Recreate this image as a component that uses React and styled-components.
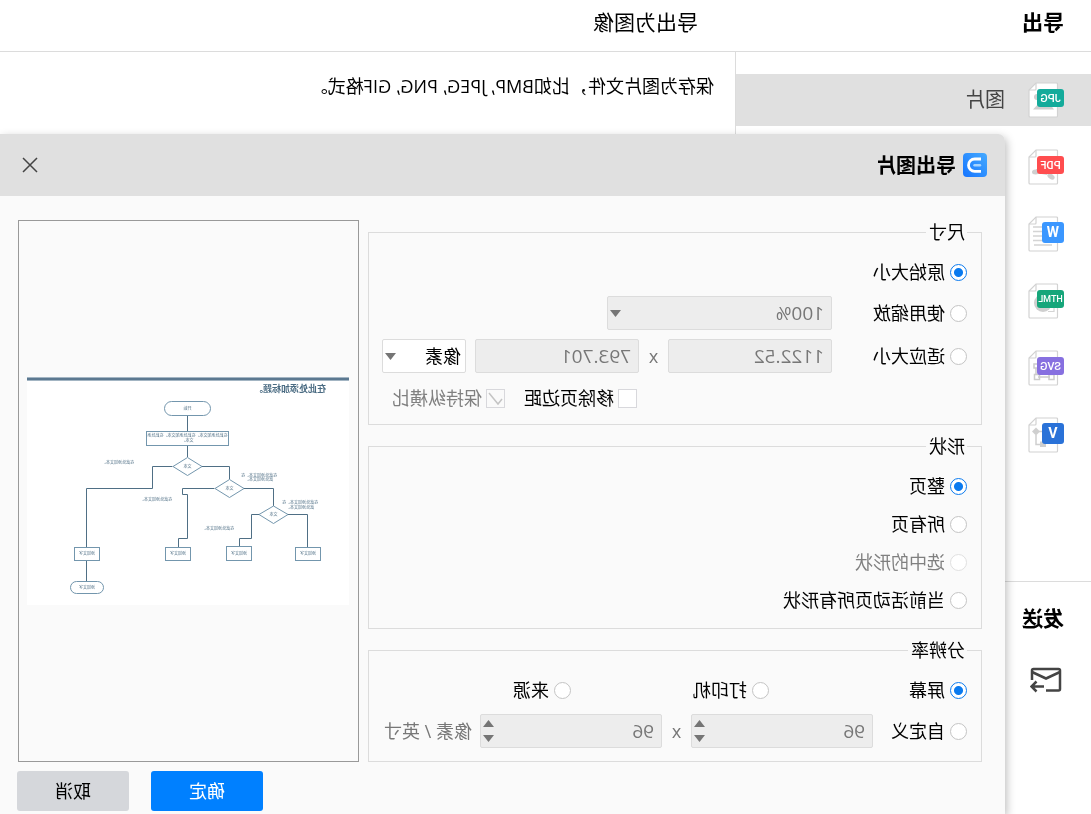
import React, { useState } from "react";
import styled, { createGlobalStyle } from "styled-components";

const GlobalStyle = createGlobalStyle`
  * {
    box-sizing: border-box;
  }

  body {
    margin: 0;
    background: #ffffff;
    color: #000000;
    font-family: "Open Sans", "Noto Sans CJK SC", sans-serif;
    font-size: 18px;
    line-height: 24px;
  }

  input,
  select,
  button {
    margin: 0;
    font: inherit;
  }
`;

// the whole window is flipped left to right
const Page = styled.div`
  position: relative;
  display: flex;
  flex-direction: column;
  min-height: 100vh;
  overflow: hidden;
  transform: scaleX(-1);
`;

const TopBar = styled.header`
  display: grid;
  grid-template-columns: 356px 1fr;
  align-items: center;
  height: 52px;
  padding-bottom: 8px;
  border-bottom: 1px solid #dcdcdc;
`;

const Heading = styled.h2`
  margin: 0;
  padding-left: 27px;
  font-size: 21px;
  font-weight: 700;
`;

const PageTitle = styled.h1`
  margin: 0;
  padding-left: 37px;
  font-size: 21px;
  font-weight: 400;
`;

const Columns = styled.div`
  display: grid;
  grid-template-columns: 356px 1fr;
  flex: 1;
`;

const Sidebar = styled.nav`
  border-right: 1px solid #dcdcdc;
`;

const FormatList = styled.div`
  display: flex;
  flex-direction: column;
  gap: 15px;
  height: 530px;
  padding-top: 22px;
  border-bottom: 1px solid #dcdcdc;
`;

const FormatButton = styled.button`
  display: flex;
  align-items: center;
  gap: 23px;
  height: 52px;
  padding: 0 27px;
  border: 0;
  background: ${(props) => (props.$active ? "#e0e0e0" : "transparent")};
  color: #444444;
  font-size: 20px;
`;

const SendSection = styled.div`
  padding-top: 24px;
`;

const MailButton = styled.button`
  display: block;
  margin: 37px 0 0 29px;
  padding: 0;
  border: 0;
  background: transparent;
`;

const Description = styled.p`
  margin: 0;
  padding: 22px 21px;
  font-size: 18px;
`;

const Dialog = styled.section`
  position: absolute;
  top: 134px;
  right: 0;
  bottom: 0;
  left: 86px;
  border-top-left-radius: 7px;
  background: #fafafa;
  box-shadow: -2px 3px 8px rgba(0, 0, 0, 0.25);
`;

const DialogHeader = styled.div`
  display: flex;
  align-items: center;
  gap: 7px;
  height: 62px;
  padding: 0 21px 0 18px;
  border-top-left-radius: 7px;
  background: #e0e0e0;
`;

const DialogTitle = styled.h2`
  flex: 1;
  margin: 0;
  padding-top: 2px;
  font-size: 20px;
  font-weight: 700;
`;

const CloseButton = styled.button`
  display: flex;
  padding: 0;
  border: 0;
  background: transparent;
`;

const DialogBody = styled.div`
  display: flex;
  gap: 9px;
  padding: 24px 18px 0 23px;
`;

const Options = styled.form`
  display: flex;
  flex: 1;
  flex-direction: column;
  gap: 9px;
  min-width: 0;
`;

const Group = styled.fieldset`
  min-width: 0;
  margin: 0;
  padding: 13px 14px ${(props) => props.$bottom || 13}px;
  border: 1px solid #dcdcdc;
`;

const Legend = styled.legend`
  padding: 0 3px 0 2px;
`;

const Rows = styled.div`
  display: flex;
  flex-direction: column;
  gap: ${(props) => props.$gap || 9}px;
`;

const Row = styled.div`
  display: flex;
  align-items: center;
  height: ${(props) => props.$height || 30}px;
`;

const Choice = styled.label`
  display: flex;
  flex: none;
  align-items: center;
  gap: 5px;
  width: ${(props) => (props.$width ? `${props.$width}px` : "auto")};
  color: ${(props) => (props.$disabled ? "#808080" : "#000000")};
  white-space: nowrap;
`;

const Radio = styled.input`
  flex: none;
  width: 17px;
  height: 17px;
  border: 1px solid #c4c4c4;
  border-radius: 50%;
  appearance: none;
  background: #ffffff;

  &:checked {
    border-color: #0a7aef;
    background: radial-gradient(circle, #0a7aef 4px, #ffffff 5px);
  }

  &:disabled {
    border-color: #e0e0e0;
  }
`;

const CheckLabel = styled(Choice)`
  gap: 4px;
`;

const Check = styled.input`
  flex: none;
  width: 19px;
  height: 19px;
  border: 1px solid #d8d8dc;
  appearance: none;
  background: #ffffff;

  &:checked {
    background: url("data:image/svg+xml,%3Csvg xmlns='http://www.w3.org/2000/svg' viewBox='0 0 17 17'%3E%3Cpath d='M2 9L6 14L15 3' fill='none' stroke='%23c4c4c4' stroke-width='1.5'/%3E%3C/svg%3E");
  }

  &:disabled {
    background-color: #fafafa;
  }
`;

const Field = styled.div`
  position: relative;
  flex: none;
  width: ${(props) => props.$width}px;
  height: 34px;
`;

const TextBox = styled.input`
  width: 100%;
  height: 34px;
  padding: 0 7px;
  border: 1px solid #dcdcdc;
  border-radius: 2px;
  background: #ededed;
  color: #777777;
  font-size: 19px;
`;

const SelectBox = styled.select`
  width: 100%;
  height: 34px;
  padding: 0 ${(props) => (props.disabled ? 7 : 4)}px;
  border: 1px solid #dcdcdc;
  border-radius: 2px;
  appearance: none;
  background: ${(props) => (props.disabled ? "#ededed" : "#ffffff")};
  color: ${(props) => (props.disabled ? "#777777" : "#000000")};
  font-size: ${(props) => (props.disabled ? 19 : 18)}px;
  opacity: 1;
`;

const SelectArrow = styled.span`
  position: absolute;
  top: 14px;
  right: 3px;
  display: flex;
  pointer-events: none;
`;

const SpinButtons = styled.div`
  position: absolute;
  top: 6px;
  right: 3px;
  display: flex;
  flex-direction: column;
  gap: 8px;

  button {
    display: flex;
    padding: 0;
    border: 0;
    background: transparent;
  }
`;

const Times = styled.span`
  flex: none;
  width: 29px;
  color: #777777;
  text-align: center;
`;

const Unit = styled.span`
  padding-left: 8px;
  color: #777777;
  white-space: nowrap;
`;

const Spacer = styled.div`
  flex: none;
  width: ${(props) => props.$width}px;
`;

const Preview = styled.div`
  display: flex;
  flex: none;
  align-items: center;
  justify-content: center;
  width: 341px;
  border: 1px solid #999999;
`;

const Footer = styled.div`
  display: flex;
  justify-content: flex-end;
  gap: 22px;
  padding: 9px 17px 0;
`;

const Button = styled.button`
  width: 112px;
  height: 40px;
  border: 0;
  border-radius: 3px;
  background: ${(props) => (props.$primary ? "#0080ff" : "#d5d7db")};
  color: ${(props) => (props.$primary ? "#ffffff" : "#000000")};
`;

const fileDrawings = {
  JPG: (
    <g fill="#cfcfcf">
      <circle cx="27" cy="15" r="3" />
      <path d="M10 27.500L17 18L21 23L24 20L31 27.500Z" />
    </g>
  ),
  PDF: (
    <g fill="#cfcfcf">
      <ellipse cx="13" cy="27.500" rx="4" ry="2.500" transform="rotate(-35 13 27.500)" />
      <ellipse cx="28.500" cy="23" rx="3.500" ry="2.500" />
      <path d="M17 22L28 20V24L17 26Z" />
    </g>
  ),
  W: (
    <path
      d="M22 11H31M22 15.500H31M22 20H31M22 24.500H31M12 29H30"
      stroke="#d4d4d4"
      strokeWidth="1.500"
    />
  ),
  HTML: (
    <g>
      <circle cx="21" cy="20" r="9" fill="#cfcfcf" />
      <path d="M10 24.500V28.500H16" fill="none" stroke="#d4d4d4" strokeWidth="1.200" />
    </g>
  ),
  SVG: (
    <g fill="none" stroke="#cccccc" strokeWidth="1.500">
      <path d="M27 14H30V18H26M14 27H26M12 18V24M28 18V24" />
      <rect x="10" y="24.500" width="5" height="5" />
      <rect x="24.500" y="24.500" width="5" height="5" />
    </g>
  ),
  V: (
    <g fill="#cfcfcf">
      <path d="M28 10.500L32 14.500L28 18.500L24 14.500Z" />
      <rect x="18" y="24.500" width="6" height="5.500" />
      <path d="M28 18V27.500H23M25 14.500H20" fill="none" stroke="#cfcfcf" strokeWidth="1.500" />
    </g>
  ),
};

const formats = [
  { name: "JPG", color: "#14ab9b", size: 11, label: "图片" },
  { name: "PDF", color: "#ff4d4f", size: 11 },
  { name: "W", color: "#3b97ff", size: 14, short: true },
  { name: "HTML", color: "#16a67a", size: 9 },
  { name: "SVG", color: "#8770e0", size: 11 },
  { name: "V", color: "#2a72d8", size: 14, short: true },
];

const FileIcon = ({ name, color, size, short }) => (
  <svg width="36" height="36" viewBox="0 0 36 36">
    <path
      d="M7.500 1H28L35 8V34Q35 35 34 35H7.500Q6.500 35 6.500 34V2Q6.500 1 7.500 1Z"
      fill="#ffffff"
      stroke="#d2d2d2"
      strokeWidth="1.200"
    />
    <path d="M28 1V7Q28 8 29 8H35" fill="none" stroke="#d2d2d2" strokeWidth="1.200" />
    {fileDrawings[name]}
    <rect
      y={short ? 6 : 7}
      width={short ? 22 : 27}
      height={short ? 21 : 18}
      rx="3"
      fill={color}
    />
    <text
      x={short ? 11 : 13.5}
      y={short ? 21 : 16 + size * 0.36}
      fill="#ffffff"
      fontFamily="Roboto, sans-serif"
      fontSize={size}
      fontWeight={short ? 700 : 500}
      textAnchor="middle"
    >
      {name}
    </text>
  </svg>
);

const Logo = () => (
  <svg width="24" height="24" viewBox="0 0 24 24">
    <defs>
      <linearGradient id="logo" x1="0" y1="0" x2="1" y2="1">
        <stop offset="0" stopColor="#45aaff" />
        <stop offset="1" stopColor="#1675ff" />
      </linearGradient>
    </defs>
    <rect width="24" height="24" rx="4" fill="url(#logo)" />
    <path
      d="M6 6H12.300A6.200 6.200 0 0 1 12.300 18.400H6"
      fill="none"
      stroke="#ffffff"
      strokeWidth="2.800"
    />
    <path d="M7 12.200H12.500" stroke="#a6d4ff" strokeWidth="2.400" strokeLinecap="round" />
  </svg>
);

const MailIcon = () => (
  <svg
    width="32"
    height="26"
    viewBox="0 0 32 26"
    fill="none"
    stroke="#444444"
    strokeWidth="2.500"
  >
    <path d="M16 23.500H3.500Q2 23.500 2 22V3.500Q2 2 3.500 2H28.500Q30 2 30 3.500V13" />
    <path d="M2 5L16 11.500L30 5" />
    <path d="M18 19.500H30M25.500 14.500L30.500 19.500L25.500 24.500" />
  </svg>
);

const Triangle = ({ up }) => (
  <svg width="11" height="7" viewBox="0 0 11 7">
    <path d={up ? "M0 7L5.500 0L11 7Z" : "M0 0L5.500 7L11 0Z"} fill="#757575" />
  </svg>
);

const Flowchart = () => (
  <svg width="322" height="228" viewBox="0 0 322 228">
    <rect width="322" height="228" fill="#ffffff" />
    <rect width="322" height="4" fill="#a3b5c3" />
    <rect y="1" width="322" height="2" fill="#5b7890" />
    <text
      x="23"
      y="15"
      fill="#4a6b82"
      fontFamily="Liberation Serif, Noto Sans CJK SC, serif"
      fontSize="9"
      fontWeight="700"
    >
      在此处添加标题。
    </text>
    <g fill="none" stroke="#4f6f85">
      <path d="M161.500 38.500V54M161.500 69V80" />
      <path d="M147.500 89.500H119.500V102" />
      <path d="M176.500 89.500H196.500V111.500H262.500V170.500M262.500 183.500V204.500" />
      <path d="M105.500 111.500H75.500V129" />
      <path d="M134.500 111.500H166.500V117.500H161.500V161.500H170.500V170.500" />
      <path d="M61.500 137.500H41.500V170.500" />
      <path d="M89.500 137.500H97.500V161.500H109.500V169.500" />
    </g>
    <g fill="#ffffff" stroke="#7396ad">
      <rect x="138.500" y="24.500" width="46" height="14" rx="7" />
      <rect x="120.500" y="54.500" width="82" height="14" />
      <path d="M161.500 80.500L176 89.500L161.500 98.500L147 89.500Z" />
      <path d="M119.500 102.500L134 111.500L119.500 120.500L105 111.500Z" />
      <path d="M75.500 129L90 137.500L75.500 146.500L61 137.500Z" />
      <rect x="28.500" y="170.500" width="25" height="13" />
      <rect x="97.500" y="169.500" width="25" height="14" />
      <rect x="158.500" y="170.500" width="25" height="13" />
      <rect x="249.500" y="170.500" width="25" height="13" />
      <rect x="245.500" y="204.500" width="33" height="12" rx="6" />
    </g>
    <g
      fill="#4f6f85"
      fontFamily="Noto Sans CJK SC, sans-serif"
      fontSize="4"
      textAnchor="middle"
    >
      <text x="161.500" y="33">开始</text>
      <text x="161.500" y="60">在此处添加文本。在此处添加文本。在此处添</text>
      <text x="161.500" y="65">文本。</text>
      <text x="161.500" y="91">文本</text>
      <text x="119.500" y="113">文本</text>
      <text x="75.500" y="139">文本</text>
      <text x="231" y="87">在此处添加文本。</text>
      <text x="193" y="124">在此处添加文本。</text>
      <text x="131" y="153">在此处添加文本。</text>
      <text x="90" y="100">在此处添加文本。在</text>
      <text x="90" y="104">此处添加文本。</text>
      <text x="49" y="127">在此处添加文本。在</text>
      <text x="49" y="132">此处添加文本。</text>
      <text x="41" y="178">添加文字</text>
      <text x="110" y="178">添加文字</text>
      <text x="171" y="178">添加文字</text>
      <text x="262" y="178">添加文字</text>
      <text x="262" y="212">添加文字</text>
    </g>
  </svg>
);

const RadioOption = ({ group, value, values, onChange, label, width, disabled }) => (
  <Choice $width={width} $disabled={disabled}>
    <Radio
      type="radio"
      name={group}
      checked={values[group] === value}
      disabled={disabled}
      onChange={onChange(group, value)}
    />
    {label}
  </Choice>
);

const Spinner = ({ label }) => (
  <Field $width={182}>
    <TextBox aria-label={label} defaultValue="96" disabled />
    <SpinButtons>
      <button type="button" aria-label="增加" disabled>
        <Triangle up />
      </button>
      <button type="button" aria-label="减少" disabled>
        <Triangle />
      </button>
    </SpinButtons>
  </Field>
);

const App = () => {
  const [format, setFormat] = useState("JPG");
  const [values, setValues] = useState({
    size: "original",
    shape: "page",
    resolution: "screen",
  });

  const handleChange = (group, value) => () => {
    setValues({ ...values, [group]: value });
  };

  const radio = { values, onChange: handleChange };

  return (
    <Page>
      <GlobalStyle />
      <TopBar>
        <Heading>导出</Heading>
        <PageTitle>导出为图像</PageTitle>
      </TopBar>
      <Columns>
        <Sidebar>
          <FormatList>
            {formats.map((item) => (
              <FormatButton
                key={item.name}
                aria-label={item.label || item.name}
                $active={format === item.name}
                onClick={() => setFormat(item.name)}
              >
                <FileIcon {...item} />
                {item.label}
              </FormatButton>
            ))}
          </FormatList>
          <SendSection>
            <Heading>发送</Heading>
            <MailButton aria-label="发送邮件">
              <MailIcon />
            </MailButton>
          </SendSection>
        </Sidebar>
        <Description>保存为图片文件，比如BMP, JPEG, PNG, GIF格式。</Description>
      </Columns>

      <Dialog role="dialog" aria-labelledby="dialog-title">
        <DialogHeader>
          <Logo />
          <DialogTitle id="dialog-title">导出图片</DialogTitle>
          <CloseButton aria-label="关闭">
            <svg width="18" height="18" viewBox="0 0 18 18">
              <path d="M2 2L16 16M16 2L2 16" stroke="#444444" strokeWidth="1.500" />
            </svg>
          </CloseButton>
        </DialogHeader>

        <DialogBody>
          <Options>
            <Group $bottom={10}>
              <Legend>尺寸</Legend>
              <Rows>
                <Row>
                  <RadioOption {...radio} group="size" value="original" label="原始大小" />
                </Row>
                <Row $height={34}>
                  <RadioOption {...radio} group="size" value="zoom" label="使用缩放" width={135} />
                  <Field $width={225}>
                    <SelectBox aria-label="缩放" disabled>
                      <option>100%</option>
                    </SelectBox>
                    <SelectArrow>
                      <Triangle />
                    </SelectArrow>
                  </Field>
                </Row>
                <Row $height={34}>
                  <RadioOption {...radio} group="size" value="fit" label="适应大小" width={135} />
                  <Field $width={164}>
                    <TextBox aria-label="宽度" defaultValue="1122.52" disabled />
                  </Field>
                  <Times>x</Times>
                  <Field $width={164}>
                    <TextBox aria-label="高度" defaultValue="793.701" disabled />
                  </Field>
                  <Spacer $width={9} />
                  <Field $width={84}>
                    <SelectBox aria-label="单位">
                      <option>像素</option>
                    </SelectBox>
                    <SelectArrow>
                      <Triangle />
                    </SelectArrow>
                  </Field>
                </Row>
                <Row $height={32}>
                  <Spacer $width={330} />
                  <CheckLabel $width={132}>
                    <Check type="checkbox" />
                    移除页边距
                  </CheckLabel>
                  <CheckLabel $disabled>
                    <Check type="checkbox" defaultChecked disabled />
                    保持纵横比
                  </CheckLabel>
                </Row>
              </Rows>
            </Group>

            <Group>
              <Legend>形状</Legend>
              <Rows $gap={8}>
                <Row>
                  <RadioOption {...radio} group="shape" value="page" label="整页" />
                </Row>
                <Row>
                  <RadioOption {...radio} group="shape" value="all" label="所有页" />
                </Row>
                <Row>
                  <RadioOption {...radio} group="shape" value="selected" label="选中的形状" disabled />
                </Row>
                <Row>
                  <RadioOption {...radio} group="shape" value="active" label="当前活动页所有形状" />
                </Row>
              </Rows>
            </Group>

            <Group>
              <Legend>分辨率</Legend>
              <Rows>
                <Row>
                  <RadioOption {...radio} group="resolution" value="screen" label="屏幕" width={198} />
                  <RadioOption {...radio} group="resolution" value="printer" label="打印机" width={198} />
                  <RadioOption {...radio} group="resolution" value="source" label="来源" />
                </Row>
                <Row $height={34}>
                  <RadioOption {...radio} group="resolution" value="custom" label="自定义" width={94} />
                  <Spinner label="水平分辨率" />
                  <Times>x</Times>
                  <Spinner label="垂直分辨率" />
                  <Unit>像素 / 英寸</Unit>
                </Row>
              </Rows>
            </Group>
          </Options>
          <Preview>
            <Flowchart />
          </Preview>
        </DialogBody>

        <Footer>
          <Button $primary>确定</Button>
          <Button>取消</Button>
        </Footer>
      </Dialog>
    </Page>
  );
};

export default App;
